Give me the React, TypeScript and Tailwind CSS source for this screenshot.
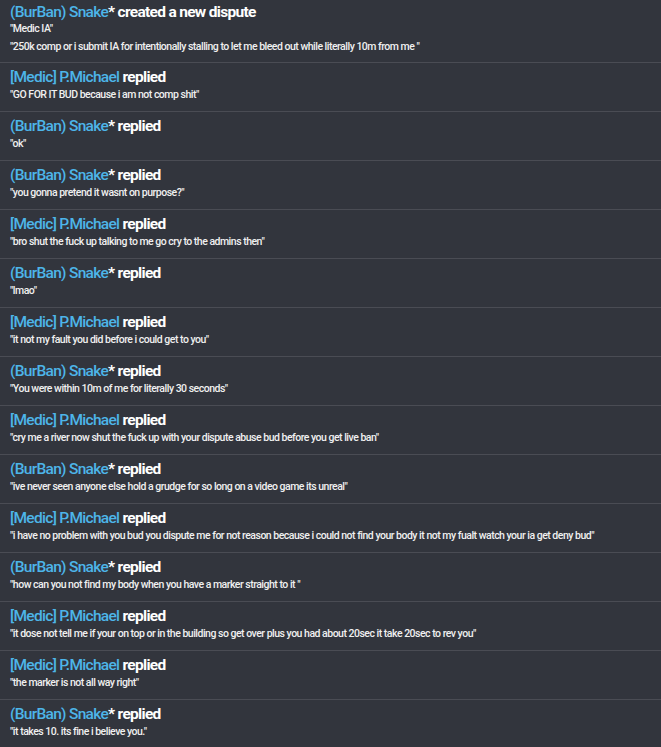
const items: { name: string; action: string; lines: string[] }[] = [
  { name: '(BurBan) Snake', action: '* created a new dispute', lines: ['"Medic IA"', '"250k comp or i submit IA for intentionally stalling to let me bleed out while literally 10m from me "'] },
  { name: '[Medic] P.Michael', action: ' replied', lines: ['"GO FOR IT BUD because i am not comp shit"'] },
  { name: '(BurBan) Snake', action: '* replied', lines: ['"ok"'] },
  { name: '(BurBan) Snake', action: '* replied', lines: ['"you gonna pretend it wasnt on purpose?"'] },
  { name: '[Medic] P.Michael', action: ' replied', lines: ['"bro shut the fuck up talking to me go cry to the admins then"'] },
  { name: '(BurBan) Snake', action: '* replied', lines: ['"lmao"'] },
  { name: '[Medic] P.Michael', action: ' replied', lines: ['"it not my fault you did before i could get to you"'] },
  { name: '(BurBan) Snake', action: '* replied', lines: ['"You were within 10m of me for literally 30 seconds"'] },
  { name: '[Medic] P.Michael', action: ' replied', lines: ['"cry me a river now shut the fuck up with your dispute abuse bud before you get live ban"'] },
  { name: '(BurBan) Snake', action: '* replied', lines: ['"ive never seen anyone else hold a grudge for so long on a video game its unreal"'] },
  { name: '[Medic] P.Michael', action: ' replied', lines: ['"i have no problem with you bud you dispute me for not reason because i could not find your body it not my fualt watch your ia get deny bud"'] },
  { name: '(BurBan) Snake', action: '* replied', lines: ['"how can you not find my body when you have a marker straight to it "'] },
  { name: '[Medic] P.Michael', action: ' replied', lines: ['"it dose not tell me if your on top or in the building so get over plus you had about 20sec it take 20sec to rev you"'] },
  { name: '[Medic] P.Michael', action: ' replied', lines: ['"the marker is not all way right"'] },
  { name: '(BurBan) Snake', action: '* replied', lines: ['"it takes 10. its fine i believe you."'] },
];

export default function App() {
  return (
    <div className="min-h-[747px] w-[661px] bg-[#32353d] font-['Roboto',sans-serif] text-white">
      {items.map((item, i) => (
        <div
          key={i}
          className={
            (i === 0 ? 'pt-[2px] pb-[8px]' : 'pt-[4px] pb-[9px]') +
            ' px-[10px]' +
            (i < items.length - 1 ? ' border-b border-[#4a4c54]' : '')
          }
        >
          <div className={(i === 0 ? 'leading-[20px]' : 'leading-[21px]') + ' whitespace-nowrap text-[15.5px] font-bold tracking-[-0.7px]'}>
            <span className="font-medium text-[#4db5e9]">{item.name}</span>
            {item.action}
          </div>
          <div className="flex flex-col gap-[4px]">
            {item.lines.map((l, j) => (
              <div key={j} className="whitespace-nowrap text-[10.5px] leading-[14px] font-medium tracking-[-0.5px] text-[#f0f0f0]">
                {l}
              </div>
            ))}
          </div>
        </div>
      ))}
    </div>
  );
}
